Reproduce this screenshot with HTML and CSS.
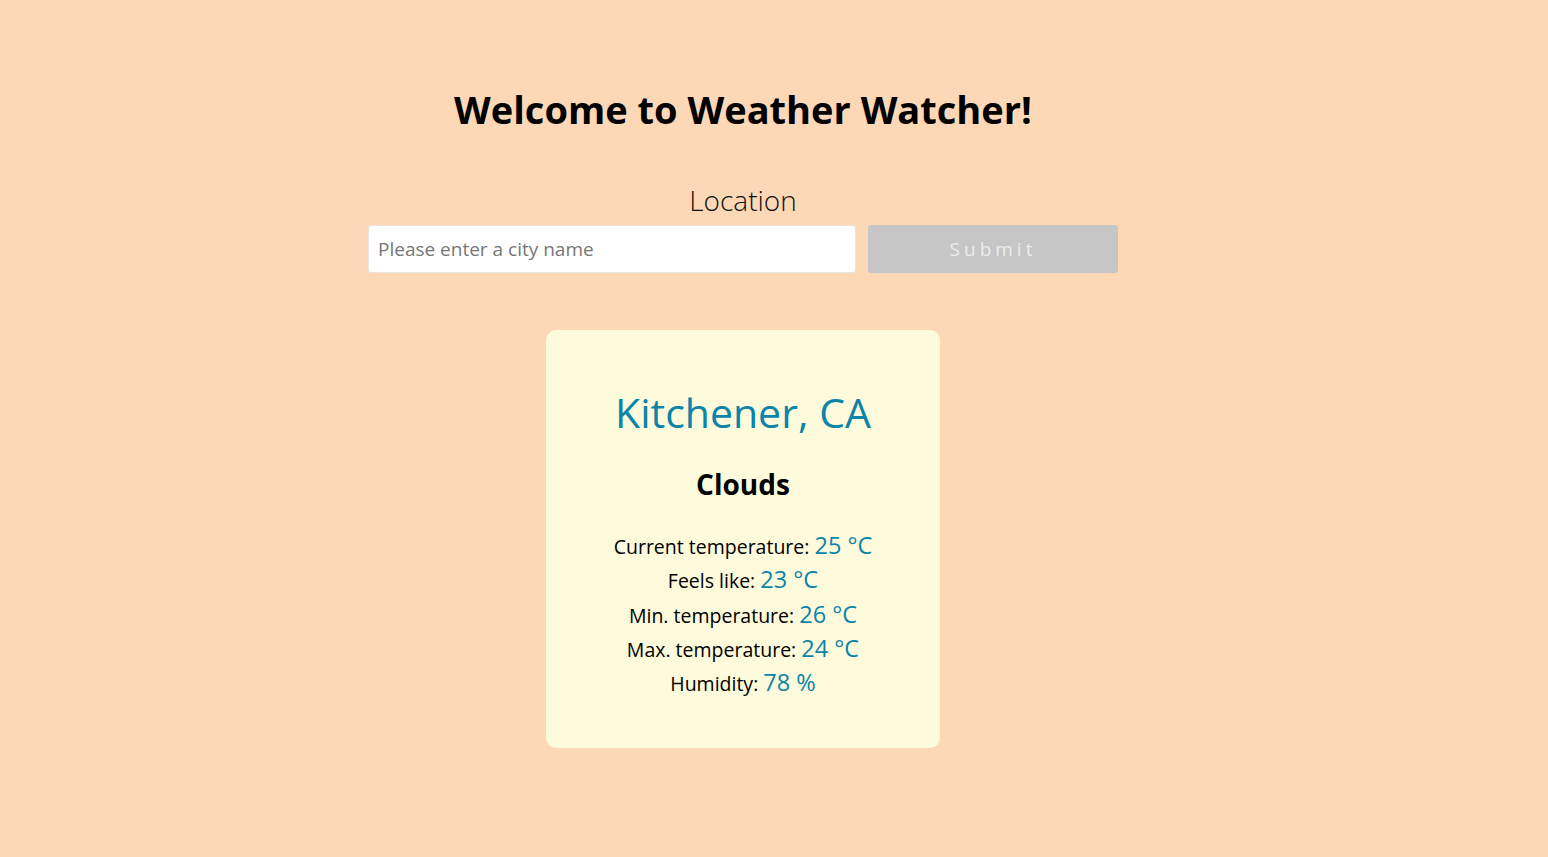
FILE: index.html
```html
<!DOCTYPE html>
<html lang="en">
<head>
<meta charset="utf-8">
<title>Weather Watcher</title>
<link rel="stylesheet" href="styles.css">
</head>
<body>
<main class="page">
  <h1 class="title">Welcome to Weather Watcher!</h1>
  <form class="search">
    <label class="search-label" for="city">Location</label>
    <div class="search-row">
      <input id="city" class="search-input" type="text" placeholder="Please enter a city name">
      <button class="search-btn" type="button" disabled>Submit</button>
    </div>
  </form>
  <section class="card">
    <h2 class="city">Kitchener, CA</h2>
    <h3 class="cond">Clouds</h3>
    <ul class="stats">
      <li>Current temperature: <span class="val">25 °C</span></li>
      <li>Feels like: <span class="val">23 °C</span></li>
      <li>Min. temperature: <span class="val">26 °C</span></li>
      <li>Max. temperature: <span class="val">24 °C</span></li>
      <li>Humidity: <span class="val">78 %</span></li>
    </ul>
  </section>
</main>
</body>
</html>
```
FILE: styles.css
```css
html, body {
  margin: 0;
  padding: 0;
  background: #fdd8b6;
  font-family: "Open Sans", "Noto Sans", sans-serif;
  color: #000;
}
.page {
  width: 1486px;
  display: flex;
  flex-direction: column;
  align-items: center;
  padding-top: 84px;
}
.title {
  margin: 0;
  font-size: 38px;
  font-weight: 700;
  line-height: 50px;
}
.search {
  margin-top: 49px;
  display: flex;
  flex-direction: column;
  align-items: center;
}
.search-label {
  font-size: 28px;
  font-weight: 300;
  line-height: 34px;
  color: #111;
}
.search-row {
  margin-top: 8px;
  display: flex;
  gap: 12px;
}
.search-input {
  box-sizing: border-box;
  width: 488px;
  height: 48px;
  border: 1px solid #e8e4e0;
  border-radius: 3px;
  background: #fff;
  padding: 0 9px;
  font-family: inherit;
  font-size: 19px;
  outline: none;
}
.search-input::placeholder {
  color: #777;
}
.search-btn {
  box-sizing: border-box;
  width: 250px;
  height: 48px;
  border: none;
  border-radius: 3px;
  background: #c6c6c6;
  color: #ececec;
  font-family: inherit;
  font-size: 19px;
  letter-spacing: 4px;
}
.card {
  margin-top: 57px;
  box-sizing: border-box;
  width: 394px;
  height: 418px;
  background: #fefbdc;
  border-radius: 10px;
  display: flex;
  flex-direction: column;
  align-items: center;
  padding-top: 52px;
}
.city {
  margin: 0;
  font-size: 41px;
  font-weight: 400;
  line-height: 60px;
  color: #0a84a8;
}
.cond {
  margin: 24px 0 0;
  font-size: 28px;
  font-weight: 700;
  line-height: 36px;
}
.stats {
  list-style: none;
  margin: 28px 0 0;
  padding: 0;
  text-align: center;
  font-size: 19.5px;
  line-height: 34.25px;
}
.val {
  font-size: 23.5px;
  line-height: 1;
  color: #0a84a8;
}
```
